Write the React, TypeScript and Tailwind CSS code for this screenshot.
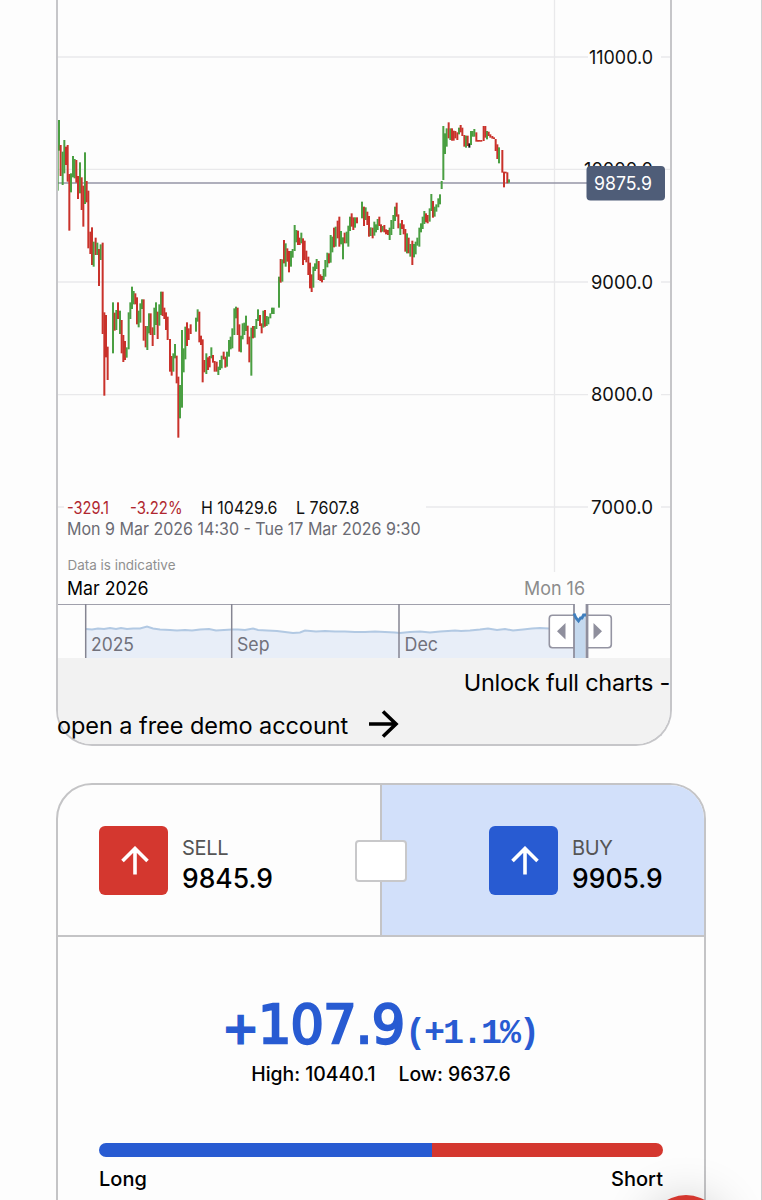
import React from "react";

type Bar = [x: number, top: number, bottom: number, kind: "g" | "r" | "k"];
type Segment = { x: number; y: number; bars: Bar[] };

// Bars are stored in thirds of a pixel, relative to the origin of their segment.
const segments: Segment[] = [
  {
    x: 50,
    y: 100,
    bars: [
      [23, 118, 272, "g"], [27, 60, 152, "g"], [32, 135, 228, "r"], [38, 155, 255, "g"], [43, 120, 220, "g"],
      [48, 140, 195, "r"], [53, 135, 245, "r"], [58, 222, 392, "r"], [63, 220, 277, "g"], [69, 168, 232, "g"],
      [74, 177, 235, "g"], [79, 180, 248, "r"], [84, 228, 297, "r"], [90, 187, 280, "g"], [95, 232, 330, "r"],
      [100, 257, 380, "r"], [105, 157, 312, "g"], [110, 243, 307, "r"], [115, 272, 445, "r"], [121, 395, 462, "r"],
      [126, 382, 495, "r"], [131, 425, 500, "g"], [137, 413, 465, "r"], [142, 428, 465, "g"], [147, 447, 558, "r"],
      [152, 433, 480, "g"], [158, 428, 702, "r"],
    ],
  },
  {
    x: 50,
    y: 270,
    bars: [
      [163, 127, 377, "r"], [168, 135, 262, "r"], [173, 230, 330, "r"], [189, 97, 250, "g"], [194, 128, 182, "r"],
      [199, 120, 180, "g"], [204, 97, 147, "r"], [210, 122, 192, "g"], [215, 150, 250, "r"], [220, 195, 276, "r"],
      [225, 213, 270, "r"], [230, 232, 263, "g"], [236, 127, 238, "g"], [241, 97, 147, "g"], [246, 50, 117, "g"],
      [251, 63, 103, "g"], [256, 70, 103, "r"], [261, 82, 163, "r"], [266, 122, 172, "g"], [271, 100, 158, "g"],
      [276, 88, 117, "g"], [281, 88, 212, "r"], [287, 168, 232, "r"], [292, 168, 240, "g"], [297, 130, 190, "g"],
      [302, 130, 195, "r"], [308, 172, 228, "r"], [313, 113, 195, "g"], [318, 97, 165, "g"], [323, 125, 207, "r"],
      [328, 103, 167, "g"], [333, 65, 135, "g"], [338, 65, 138, "r"], [343, 113, 147, "r"], [348, 127, 180, "r"],
      [353, 140, 210, "r"], [360, 207, 305, "r"], [365, 258, 317, "r"], [370, 250, 305, "g"], [375, 222, 265, "g"],
      [380, 257, 340, "r"], [385, 320, 503, "r"], [390, 345, 445, "g"], [396, 180, 413, "g"], [401, 235, 307, "g"],
      [406, 170, 268, "g"], [411, 157, 228, "r"], [416, 175, 210, "r"], [422, 163, 192, "r"], [438, 143, 185, "g"],
      [443, 118, 155, "g"], [448, 125, 217, "r"], [453, 197, 225, "r"], [458, 208, 337, "r"], [463, 270, 307, "r"],
      [469, 250, 312, "g"], [474, 262, 300, "r"], [479, 258, 292, "r"], [484, 232, 265, "g"], [489, 255, 278, "r"],
      [494, 273, 305, "r"], [500, 275, 305, "r"], [505, 290, 315, "g"], [510, 270, 300, "g"], [515, 257, 295, "g"],
      [521, 245, 268, "r"], [526, 260, 293, "r"], [531, 245, 290, "g"],
    ],
  },
  {
    x: 200,
    y: 210,
    bars: [
      [87, 390, 440, "g"], [92, 380, 418, "g"], [97, 355, 415, "g"], [103, 295, 375, "g"], [108, 290, 325, "g"],
      [113, 293, 375, "r"], [118, 343, 425, "r"], [123, 377, 427, "g"], [128, 340, 388, "g"], [133, 338, 375, "g"],
      [138, 317, 363, "g"], [143, 347, 403, "r"], [148, 380, 457, "r"], [154, 353, 497, "g"], [159, 348, 385, "r"],
      [164, 348, 383, "g"], [169, 327, 357, "g"], [174, 298, 333, "g"], [180, 315, 348, "r"], [185, 340, 370, "r"],
      [190, 302, 353, "g"], [195, 300, 350, "r"], [200, 318, 348, "g"], [205, 320, 343, "g"], [211, 310, 325, "g"],
      [216, 293, 312, "g"], [221, 293, 312, "g"], [237, 200, 293, "g"], [242, 147, 218, "r"], [247, 148, 215, "g"],
      [252, 90, 160, "r"], [257, 100, 170, "g"], [262, 115, 155, "r"], [267, 123, 187, "r"], [273, 123, 170, "g"],
      [278, 117, 143, "g"], [284, 45, 123, "g"], [289, 60, 97, "g"], [294, 62, 105, "r"], [299, 83, 105, "r"],
      [304, 68, 100, "g"], [309, 85, 165, "r"], [314, 92, 150, "r"], [319, 122, 157, "r"], [325, 140, 195, "r"],
      [330, 158, 235, "r"], [335, 193, 246, "r"], [340, 170, 233, "g"], [345, 160, 183, "g"], [350, 147, 177, "g"],
      [356, 153, 210, "r"], [361, 193, 213, "r"], [366, 198, 217, "r"], [371, 177, 210, "g"], [376, 150, 200, "g"],
      [382, 128, 172, "g"], [387, 130, 160, "r"], [392, 75, 158, "g"], [397, 80, 127, "g"], [402, 53, 112, "r"],
      [407, 50, 110, "g"], [413, 32, 85, "r"], [418, 20, 110, "r"], [423, 63, 103, "g"], [429, 82, 148, "g"],
      [434, 68, 100, "r"], [440, 65, 100, "g"], [445, 47, 110, "g"], [450, 20, 63, "g"], [455, 10, 50, "r"],
      [460, 22, 60, "r"], [465, 22, 53, "g"], [471, 22, 40, "r"],
    ],
  },
  {
    x: 350,
    y: 100,
    bars: [
      [36, 305, 355, "g"], [42, 320, 378, "r"], [47, 322, 360, "g"], [52, 335, 375, "r"], [57, 348, 410, "r"],
      [62, 382, 408, "g"], [68, 383, 415, "r"], [73, 365, 407, "g"], [78, 373, 397, "g"], [83, 357, 390, "g"],
      [88, 350, 378, "r"], [93, 373, 397, "r"], [98, 378, 395, "g"], [103, 375, 397, "r"], [108, 388, 403, "r"],
      [114, 390, 405, "r"], [119, 383, 420, "g"], [124, 360, 405, "g"], [130, 345, 387, "g"], [135, 320, 363, "g"],
      [140, 308, 350, "r"], [145, 343, 385, "r"], [151, 370, 405, "g"], [156, 360, 387, "r"], [161, 373, 403, "r"],
      [166, 387, 455, "r"], [171, 400, 460, "g"], [176, 413, 460, "r"], [181, 432, 470, "g"], [187, 422, 495, "r"],
      [192, 432, 472, "g"], [197, 425, 463, "g"], [202, 413, 437, "g"], [208, 383, 440, "g"], [213, 370, 397, "g"],
      [218, 350, 387, "g"], [223, 333, 372, "g"], [228, 340, 367, "r"], [233, 345, 370, "r"], [239, 325, 365, "g"],
      [244, 282, 333, "g"], [249, 303, 353, "r"], [254, 320, 350, "g"], [259, 313, 335, "g"], [265, 295, 322, "g"],
      [270, 283, 313, "g"], [275, 243, 267, "g"], [280, 78, 240, "g"], [285, 100, 162, "g"], [290, 85, 140, "g"],
      [296, 67, 115, "r"], [301, 85, 120, "g"], [306, 85, 122, "r"], [311, 92, 122, "r"], [316, 93, 115, "r"],
      [322, 97, 120, "r"], [327, 83, 103, "g"], [332, 75, 97, "r"], [337, 83, 108, "r"], [343, 105, 140, "r"],
      [348, 107, 143, "g"], [353, 107, 138, "r"], [358, 130, 143, "k"], [363, 93, 135, "g"], [368, 93, 110, "g"],
      [373, 87, 110, "g"], [379, 97, 125, "r"], [384, 120, 125, "r"], [389, 120, 125, "r"], [394, 120, 125, "r"],
      [401, 78, 123, "r"], [406, 78, 113, "r"], [411, 93, 118, "g"], [416, 95, 108, "r"], [421, 103, 113, "r"],
      [427, 108, 116, "r"], [432, 112, 117, "r"], [437, 117, 153, "r"], [442, 133, 177, "r"], [447, 142, 190, "g"],
      [457, 150, 218, "r"], [462, 215, 262, "r"], [467, 215, 220, "r"], [472, 217, 250, "r"], [477, 238, 248, "g"],
    ],
  },
];

const barColors = { g: "#4a9f42", r: "#c9322b", k: "#111111" };

const overview =
  "86,629 92,629.5 98,628.5 104,629 110,628 116,629 121,628 127,629 133,628.5 140,628.5 147,626.5 153,628.5 160,629.5 170,630 177,630.5 185,630 192,630.5 200,629.5 209,629 216,630.5 224,630 232,629.5 238,629.5 245,630 253,628.5 258,630 267,630.5 277,631 285,632 293,633 300,632.5 305,630.5 316,631.5 325,631 335,631.5 345,631.5 355,632 365,632 375,631.5 385,632 395,632.5 400,633 410,632 420,631.5 430,632.5 440,631.5 448,631 455,630.5 461,631 470,630.5 480,629.5 488,628.5 497,630 505,629 513,630.5 523,629.5 532,628.5 540,628 549,628.5";

type LabelProps = { x: number; y: number; w: number; size: number; fill?: string; children: string };

function Label({ x, y, w, size, fill = "#111", children }: LabelProps) {
  return (
    <text x={x} y={y} fontSize={size} fill={fill} textLength={w} lengthAdjust="spacingAndGlyphs">
      {children}
    </text>
  );
}

function PriceChart() {
  return (
    <svg className="block h-[658px] w-full" viewBox="58 0 612 658" fontFamily="Inter, sans-serif">
      <g stroke="#e9e9eb" strokeWidth="1.3">
        <path d="M58 57H588M661 57H670M58 169.3H670M58 282H588M661 282H670M58 394.7H588M661 394.7H670M58 507H64M426 507H588M661 507H670" />
        <path d="M554.5 0V572" />
      </g>
      <path d="M58 183H590" stroke="#9494a6" strokeWidth="1.4" />
      {segments.map((s) =>
        s.bars.map(([x, top, bottom, kind]) => (
          <rect
            key={`${s.x}-${s.y}-${x}`}
            x={s.x + x / 3 - 1}
            y={s.y + top / 3}
            width={2}
            height={(bottom - top) / 3}
            fill={barColors[kind]}
          />
        )),
      )}

      <Label x={589} y={64} w={64} size={19}>11000.0</Label>
      <Label x={584} y={176} w={69} size={19}>10000.0</Label>
      <Label x={591} y={289} w={62} size={19}>9000.0</Label>
      <Label x={591} y={401} w={62} size={19}>8000.0</Label>
      <Label x={591} y={514} w={62} size={19}>7000.0</Label>
      <rect x="586.5" y="166" width="78.5" height="34.5" rx="4" fill="#4f5d78" />
      <Label x={594} y={190} w={58} size={19} fill="#fff">9875.9</Label>

      <Label x={67} y={514} w={42} size={17} fill="#b0272f">-329.1</Label>
      <Label x={130} y={514} w={52.5} size={17} fill="#b0272f">-3.22%</Label>
      <Label x={201} y={514} w={76.5} size={17}>H 10429.6</Label>
      <Label x={296} y={514} w={63.5} size={17}>L 7607.8</Label>
      <Label x={67} y={535} w={353.5} size={17} fill="#6b6b73">Mon 9 Mar 2026 14:30 - Tue 17 Mar 2026 9:30</Label>
      <Label x={67.5} y={570} w={108} size={13.5} fill="#909090">Data is indicative</Label>
      <Label x={67} y={595} w={81.5} size={18.5} fill="#000">Mar 2026</Label>
      <Label x={524} y={595} w={61} size={18.5} fill="#8c8c8c">Mon 16</Label>

      <polygon points={`86,658 ${overview} 574,629 574,658`} fill="#e8eef8" />
      <polyline points={overview} fill="none" stroke="#b2c9e3" strokeWidth="2" />
      <path d="M58 604.5H574M587 604.5H670" stroke="#a0a0ac" strokeWidth="1.2" />
      <path d="M85.7 604V658M231.7 604V658M399 604V658" stroke="#858592" strokeWidth="1.5" />
      <Label x={91} y={651} w={43} size={18.5} fill="#71717c">2025</Label>
      <Label x={237} y={651} w={32.5} size={18.5} fill="#71717c">Sep</Label>
      <Label x={404.5} y={651} w={33.5} size={18.5} fill="#71717c">Dec</Label>

      <path d="M574 614L578.5 621L581 617L585.5 615V658H574Z" fill="#c5d9ee" />
      <path
        d="M574 615.3H552.5Q549.3 615.3 549.3 618.5V644.5Q549.3 647.7 552.5 647.7H574M587 615.3H608Q611.3 615.3 611.3 618.5V644.5Q611.3 647.7 608 647.7H587"
        fill="#fff"
        stroke="#9494a2"
        strokeWidth="1.6"
      />
      <path d="M574 604V658" stroke="#8f8f9d" strokeWidth="1.8" />
      <path d="M587 604V658" stroke="#8f8f9d" strokeWidth="2.8" />
      <path d="M574 613.5L576 618L578.5 621L580.5 618L582 618L583.5 615L586 615" fill="none" stroke="#3f7fbe" strokeWidth="2.8" />
      <path d="M565.5 623V639.5L557 631.3ZM593.5 623V639.5L602 631.3Z" fill="#8f8f9d" />
    </svg>
  );
}

function UpArrow() {
  return (
    <svg className="ml-0.5" width="28" height="29" viewBox="0 0 28 29" fill="none" stroke="#fff" strokeWidth="3.6">
      <path d="M14 28.5V2.5M1.5 15L14 2.5L26.5 15" />
    </svg>
  );
}

function Quote({ side, price, color }: { side: string; price: string; color: string }) {
  return (
    <div className="flex items-start">
      <div className={`flex h-[69px] w-[69px] items-center justify-center rounded-[6px] ${color}`}>
        <UpArrow />
      </div>
      <div className="ml-[14px] w-[91px] pt-[9px]">
        <div className="text-[20px] leading-[26px] tracking-[-0.3px] text-[#555]">{side}</div>
        <div className="text-[26.5px] font-medium leading-[35px] text-black">{price}</div>
      </div>
    </div>
  );
}

export default function App() {
  return (
    <div className="relative h-[1200px] w-[762px] overflow-hidden border-r border-[#cfcfcf] bg-[#fdfdfd] pl-14 font-[Inter,sans-serif] text-black">
      <section className="h-[746px] w-[616px] rounded-b-[36px] border-2 border-t-0 border-[#c6c6c9] bg-[#fdfdfd]">
        <PriceChart />
        <div className="h-[86px] rounded-b-[34px] bg-[#f2f2f2] pt-[3px] text-[23.5px] leading-[43px] whitespace-nowrap">
          <div className="flex justify-end tracking-[-0.27px]">Unlock full charts -</div>
          <div className="-ml-px flex items-center tracking-[-0.06px]">
            <span>open a free demo account</span>
            <svg className="mb-1 ml-[21px]" width="30" height="28" viewBox="0 0 30 28" fill="none" stroke="#000" strokeWidth="3.6">
              <path d="M0 14H27M14 1.5L27 14L14 26.5" />
            </svg>
          </div>
        </div>
      </section>

      <section className="mt-[37px] h-[480px] w-[650px] rounded-t-[36px] border-2 border-[#c4c4c6]">
        <div className="relative flex h-[152px] border-b-2 border-[#c4c4c6]">
          <div className="w-[324px] border-r-2 border-[#c4c4c6] pt-[41px] pl-[41px]">
            <Quote side="SELL" price="9845.9" color="bg-[#d4372f]" />
          </div>
          <div className="flex-1 rounded-tr-[34px] bg-[#d2e0fa] pt-[41px] pl-[107px]">
            <Quote side="BUY" price="9905.9" color="bg-[#285bd2]" />
          </div>
          <div className="absolute top-[55px] left-[297px] h-[42px] w-[52px] rounded-[4px] border-2 border-[#c8c8ca] bg-white" />
        </div>

        <div className="mt-[52px] flex h-[70px] items-baseline pl-[165px] leading-[72px] font-[DejaVu_Sans,sans-serif] text-[#285bd2] whitespace-nowrap">
          <span className="w-[35px] text-[42px] leading-[72px] [-webkit-text-stroke:3px_#285bd2]">+</span>
          <span className="w-[147px] text-[52.5px] leading-[72px] tracking-[-0.8px] [-webkit-text-stroke:2.4px_#285bd2]">107.9</span>
          <span className="text-[35px] leading-[72px] font-bold tracking-[-2px] font-[Liberation_Mono,monospace]">(+1.1%)</span>
        </div>
        <div className="mt-0 flex justify-center gap-[23px] pt-px text-[19.4px] leading-[28px] font-medium">
          <span>High: 10440.1</span>
          <span>Low: 9637.6</span>
        </div>

        <div className="mx-[41px] mt-[55px] flex h-[14px] overflow-hidden rounded-[7px]">
          <div className="w-[333px] bg-[#285bd2]" />
          <div className="flex-1 bg-[#d4372f]" />
        </div>
        <div className="mx-[41px] mt-2 flex justify-between text-[20px] leading-[28px] font-medium">
          <span>Long</span>
          <span>Short</span>
        </div>
      </section>

      <div className="absolute top-[1195px] left-[648px] h-[76px] w-[76px] rounded-full bg-[#d4372f] shadow-[0_4px_48px_rgba(0,0,0,0.2)]" />
    </div>
  );
}
